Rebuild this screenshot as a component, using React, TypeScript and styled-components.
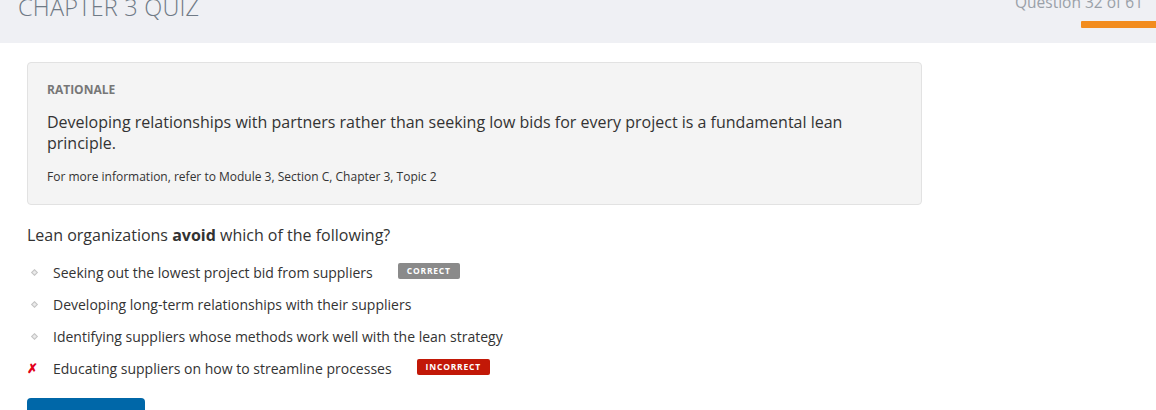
import styled, { createGlobalStyle } from 'styled-components'

const GlobalStyle = createGlobalStyle`
	body {
		margin: 0;
		font-family: 'Open Sans', 'Liberation Sans', sans-serif;
		color: #333;
		background: #fff;
	}
`

const Header = styled.header`
	height: 43px;
	background-color: #eff0f4;
	display: flex;
	justify-content: space-between;
	align-items: flex-start;
	overflow: hidden;
`
const Title = styled.h1`
	margin: -10px 0 0 18px;
	font-size: 23.5px;
	font-weight: 300;
	color: #6f7a86;
	line-height: 34px;
	letter-spacing: 0.2px;
`
const Progress = styled.div`
	display: flex;
	flex-direction: column;
	align-items: flex-end;
`
const Counter = styled.span`
	margin: -8px 13px 0 0;
	font-size: 15.5px;
	line-height: 20px;
	color: #9aa0a8;
`
const Bar = styled.div`
	margin-top: 9px;
	width: 75px;
	height: 7px;
	background-color: #f28c1e;
	border-radius: 1px 0 0 1px;
`

const Main = styled.main`
	padding: 19px 27px 0;
`
const Rationale = styled.section`
	width: 895px;
	box-sizing: border-box;
	background-color: #f4f4f4;
	border: 1px solid #e2e2e2;
	border-radius: 4px;
	padding: 19px 19px 19px;
`
const Label = styled.h3`
	margin: 0;
	font-size: 12px;
	font-weight: 700;
	color: #777;
	line-height: 16px;
`
const Body = styled.p`
	margin: 14px 0 0;
	width: 820px;
	font-size: 16px;
	line-height: 21px;
	color: #333;
`
const Note = styled.p`
	margin: 14px 0 0;
	font-size: 12px;
	line-height: 17px;
	color: #333;
`
const Question = styled.h2`
	margin: 19px 0 0;
	font-size: 16px;
	font-weight: 400;
	line-height: 22px;
	color: #333;
	b {
		font-weight: 700;
	}
`
const Options = styled.ul`
	list-style: none;
	margin: 16px 0 0;
	padding: 0;
	display: flex;
	flex-direction: column;
	gap: 12px;
`
const Option = styled.li`
	display: flex;
	align-items: center;
	height: 20px;
	font-size: 14px;
	color: #333;
`
const Marker = styled.span<{ $wrong?: boolean }>`
	width: 26px;
	flex-shrink: 0;
	display: flex;
	align-items: center;
	font-size: 13px;
	font-weight: 700;
	color: #e2001a;
	${(p) =>
		!p.$wrong &&
		`
		&::before {
			content: '';
			width: 3px;
			height: 3px;
			margin-left: 5px;
			border: 1px solid #c4c4c4;
			background: #eaeaea;
			transform: rotate(45deg);
		}
	`}
`
const Badge = styled.span<{ $kind: 'correct' | 'incorrect' }>`
	margin-left: 25px;
	margin-top: -2px;
	height: 16px;
	padding: 0 9px;
	border-radius: 2px;
	font-size: 8.5px;
	font-weight: 700;
	letter-spacing: 0.8px;
	line-height: 16px;
	color: #fff;
	background-color: ${(p) => (p.$kind === 'correct' ? '#8a8a8a' : '#c21807')};
`
const Submit = styled.button`
	margin-top: 20px;
	width: 118px;
	height: 36px;
	border: none;
	border-radius: 4px;
	background-color: #0067a8;
	color: #fff;
`

const options = [
	{ text: 'Seeking out the lowest project bid from suppliers', badge: 'correct' as const },
	{ text: 'Developing long-term relationships with their suppliers' },
	{ text: 'Identifying suppliers whose methods work well with the lean strategy' },
	{ text: 'Educating suppliers on how to streamline processes', badge: 'incorrect' as const, wrong: true },
]

export default function App() {
	return (
		<>
			<GlobalStyle />
			<Header>
				<Title>CHAPTER 3 QUIZ</Title>
				<Progress>
					<Counter>Question 32 of 61</Counter>
					<Bar />
				</Progress>
			</Header>
			<Main>
				<Rationale>
					<Label>RATIONALE</Label>
					<Body>
						Developing relationships with partners rather than seeking low bids for every project is a fundamental lean principle.
					</Body>
					<Note>For more information, refer to Module 3, Section C, Chapter 3, Topic 2</Note>
				</Rationale>
				<Question>
					Lean organizations <b>avoid</b> which of the following?
				</Question>
				<Options>
					{options.map((o) => (
						<Option key={o.text}>
							<Marker $wrong={o.wrong}>{o.wrong ? '✗' : null}</Marker>
							{o.text}
							{o.badge ? <Badge $kind={o.badge}>{o.badge.toUpperCase()}</Badge> : null}
						</Option>
					))}
				</Options>
				<Submit />
			</Main>
		</>
	)
}
